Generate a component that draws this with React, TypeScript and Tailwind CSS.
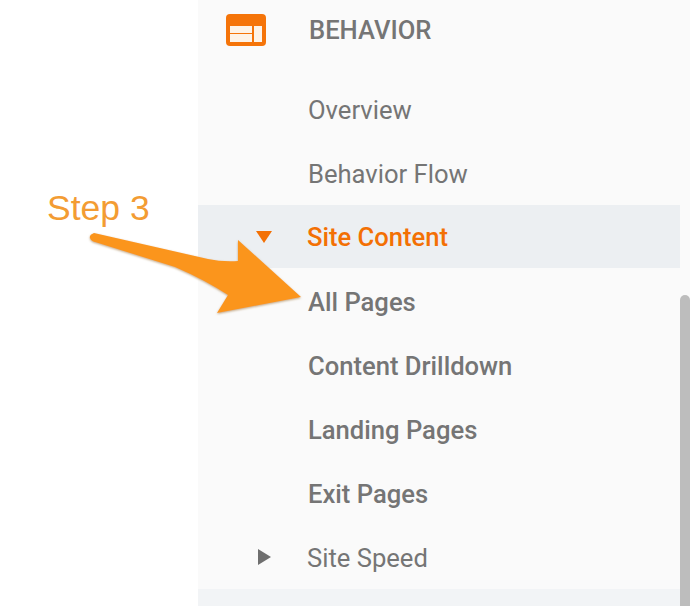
const font = "font-['Roboto',sans-serif]";

function Row({ label, className = "" }: { label: string; className?: string }) {
  return (
    <div className={`flex h-16 items-center ${className}`}>
      <div className="w-[109px] shrink-0" />
      <span className="relative top-px">{label}</span>
    </div>
  );
}

function Arrow() {
  return (
    <svg className="pointer-events-none absolute left-0 top-0" width="320" height="330" viewBox="0 0 320 330">
      <defs>
        <filter id="s" x="-10%" y="-10%" width="120%" height="120%">
          <feDropShadow dx="0" dy="1" stdDeviation="0.8" floodColor="#a8824f" floodOpacity="0.7" />
        </filter>
      </defs>
      <path
        d="M94 233 Q89 235 90 238 Q91 241 95 242 L175 267 Q205 280 228 295 L217 313 L301 297 L238 240 L238 261 Q222 262 208 259 Z"
        fill="#fb951f"
        filter="url(#s)"
      />
    </svg>
  );
}

export default function App() {
  return (
    <div className={`relative flex h-[606px] w-[690px] overflow-hidden bg-white ${font}`}>
      <div className="w-[198px] shrink-0 pl-[47px] pt-[186px]">
        <span className="font-['Liberation_Sans',sans-serif] text-[35.5px] leading-[44px] text-[#f39c33]">Step 3</span>
      </div>
      <div className="flex min-w-0 flex-1 flex-col bg-[#fafafa] text-[25.6px] text-[#757575]">
        <div className="flex h-[60px] items-center">
          <div className="flex w-[111px] shrink-0 pl-[28px]">
            <svg width="40" height="32" viewBox="0 0 40 32">
              <rect width="40" height="32" rx="4" fill="#f57409" />
              <rect x="4" y="12" width="22" height="7" fill="#fdf3e8" />
              <rect x="4" y="20" width="22" height="8" fill="#fdf3e8" />
              <rect x="28" y="12" width="8" height="16" fill="#fdf3e8" />
            </svg>
          </div>
          <span className="font-medium">BEHAVIOR</span>
        </div>
        <div className="h-[17px]" />
        <Row label="Overview" className="pl-[1px]" />
        <Row label="Behavior Flow" className="pl-[1px]" />
        <div className="mr-[10px] flex h-[63px] items-center bg-[#eceff2] font-medium text-[#f37004]">
          <div className="w-[109px] shrink-0 pl-[58px]">
            <svg className="block" width="16" height="12" viewBox="0 0 16 12">
              <path d="M0 0H16L8 12Z" fill="#f37004" />
            </svg>
          </div>
          <span className="relative top-px">Site Content</span>
        </div>
        <div className="h-px" />
        <Row label="All Pages" className="pl-[1px] font-medium" />
        <Row label="Content Drilldown" className="pl-[1px] font-medium" />
        <Row label="Landing Pages" className="pl-[1px] font-medium" />
        <Row label="Exit Pages" className="pl-[1px] font-medium" />
        <div className="flex h-16 items-center">
          <div className="w-[109px] shrink-0 pl-[60px]">
            <svg className="block" width="13" height="16" viewBox="0 0 13 16">
              <path d="M0 0L13 8L0 16Z" fill="#6f6f6f" />
            </svg>
          </div>
          <span className="relative top-px">Site Speed</span>
        </div>
        <div className="flex-1 bg-[#f2f4f6]" />
      </div>
      <div className="absolute bottom-0 right-0 top-[295px] w-[10px] rounded-t-[6px] bg-[#bdbdbd]" />
      <Arrow />
    </div>
  );
}
